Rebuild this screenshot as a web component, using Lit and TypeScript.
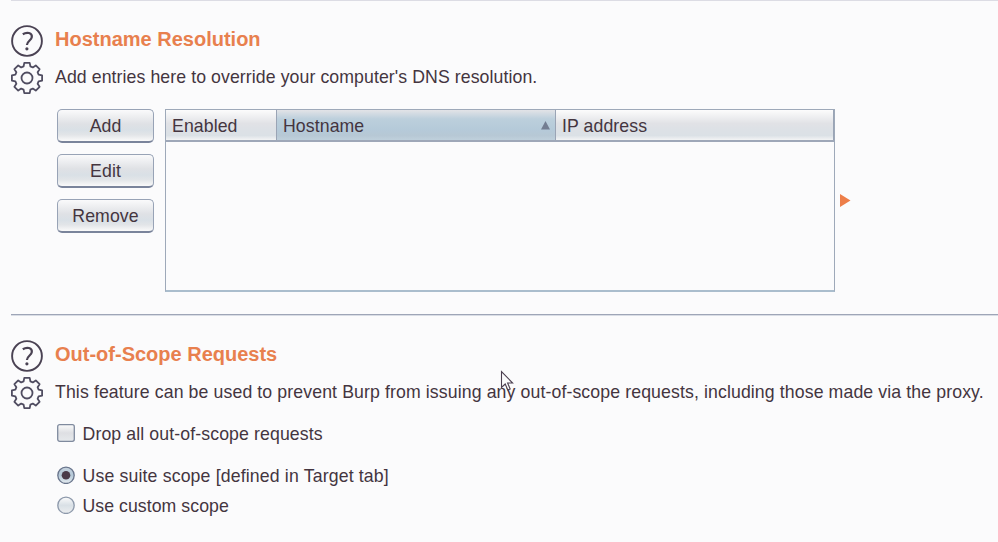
import { LitElement, html, css, svg } from "lit";
import { customElement, property } from "lit/decorators.js";

// Outline of an eight-toothed cog centred on 16,16.
function cogPath(): string {
  const points: string[] = [];
  const outer = 15.1;
  const root = 11.6;
  for (let i = 0; i < 8; i++) {
    const a = (i * Math.PI) / 4;
    const at = (along: number, side: number) =>
      `${(16 + along * Math.cos(a) - side * Math.sin(a)).toFixed(2)} ${(16 + along * Math.sin(a) + side * Math.cos(a)).toFixed(2)}`;
    points.push(`${i ? "L" : "M"}${at(root, -3.4)}L${at(outer, -2.7)}L${at(outer, 2.7)}L${at(root, 3.4)}`);
  }
  return points.join("") + "Z";
}

@customElement("help-icon")
class HelpIcon extends LitElement {
  static styles = css`
    :host { display: block; width: 32px; height: 32px; }
    svg { display: block; }
  `;
  render() {
    return html`<svg width="32" height="32" viewBox="0 0 32 32" fill="none" stroke="#4a4253">
      <circle cx="16" cy="16" r="14.9" stroke-width="1.9"></circle>
      <path d="M11.8 9.2C14 7.8 16.3 7.6 18 8C20.2 8.6 21.1 10.2 20.8 12.2C20.3 15.4 16.2 15.8 15.9 20" stroke-width="2.2"></path>
      <circle cx="15.9" cy="23.8" r="1.6" fill="#4a4253" stroke="none"></circle>
    </svg>`;
  }
}

@customElement("gear-icon")
class GearIcon extends LitElement {
  static styles = css`
    :host { display: block; width: 32px; height: 32px; }
    svg { display: block; }
  `;
  render() {
    return html`<svg width="32" height="32" viewBox="0 0 32 32" fill="none" stroke="#504d61" stroke-width="1.8" stroke-linejoin="round">
      ${svg`<path d=${cogPath()}></path>`}
      <circle cx="16" cy="16" r="5.5"></circle>
    </svg>`;
  }
}

@customElement("option-section")
class OptionSection extends LitElement {
  @property() heading = "";
  @property() description = "";
  static styles = css`
    :host { display: block; }
    .row { display: flex; gap: 12px; height: 32px; margin-bottom: 5.4px; }
    .row.last { margin-bottom: -0.4px; }
    .title, .desc { margin: 0; line-height: 24px; white-space: nowrap; }
    .title { font-size: 20px; font-weight: bold; letter-spacing: 0; color: #e8804e; padding-top: 2px; }
    .desc { font-size: 17.7px; font-weight: normal; padding-top: 2.6px; }
  `;
  render() {
    return html`
      <div class="row"><help-icon></help-icon><h2 class="title">${this.heading}</h2></div>
      <div class="row last"><gear-icon></gear-icon><p class="desc">${this.description}</p></div>
      <slot></slot>`;
  }
}

@customElement("app-root")
class AppRoot extends LitElement {
  static styles = css`
    :host {
      display: block; box-sizing: border-box; height: 542px; overflow: hidden;
      position: relative; padding-left: 11px; background: #fbfbfc; color: #44353f;
      font-family: "Liberation Sans", Arial, sans-serif; font-size: 17.7px;
    }
    .rule { height: 1px; background: #dcdce4; }
    .rule.mid { background: #9ea5b7; border-bottom: 1px solid #d9dde5; }
    .first { height: 289px; padding-top: 24px; letter-spacing: 0.085px; }
    .second { padding-top: 24px; letter-spacing: 0.11px; }
    .body { display: flex; padding: 15px 0 0 46px; }
    .buttons { display: flex; flex-direction: column; gap: 11px; width: 97px; margin-right: 11px; }
    .button {
      box-sizing: border-box; height: 34px; width: 97px; padding: 2px 0 0;
      border: 1px solid #98a3b6; border-bottom: 2px solid #7a849b; border-radius: 5px;
      background: linear-gradient(#fafafb, #dfe1e5 45%, #d9e0e6 65%, #e2e5e8 80%, #fafafa);
      font: inherit; color: inherit; letter-spacing: inherit; line-height: 29px;
    }
    .table {
      box-sizing: border-box; width: 670px; height: 183px;
      border: 1px solid #9ea9b9; border-bottom: 2px solid #aabdcd;
    }
    .head { display: grid; grid-template-columns: 111px 279px 278px; height: 30px; border-bottom: 2px solid #9ea7b8; }
    .cell {
      box-sizing: border-box; height: 30px; display: flex; align-items: center; justify-content: space-between;
      padding: 2px 5px 0 6px; line-height: 28px; border-right: 1px solid #9aa4b5;
      background: linear-gradient(#fcfcfc, #e1e2e6 45%, #dde1e6 65%, #dbe1e6 85%, #f3f4f5);
    }
    .cell svg { margin-bottom: 1px; }
    .cell.sorted { background: linear-gradient(#e2e3e7, #bccfdc 30%, #b5cad9 65%, #b7c8d5 85%, #bfd0dc); }
    .arrow { margin: 85px 0 0 5px; }
    .choices { padding: 14px 0 0 46px; }
    .choice { display: flex; align-items: center; gap: 7.5px; height: 20px; margin-bottom: 10px; line-height: 20px; }
    .choice span { padding-top: 2px; }
    .choice.wide { margin-bottom: 22px; }
    .choice.target { letter-spacing: 0.15px; }
    .choice.custom { letter-spacing: 0.05px; }
    .cursor { position: absolute; left: 500px; top: 370px; }
    svg { display: block; flex: none; }
  `;

  radio(checked: boolean) {
    return html`<svg width="18" height="18" viewBox="0 0 18 18">
      <circle cx="9" cy="9.3" r="8.2" fill=${checked ? "url(#on)" : "url(#off)"} stroke=${checked ? "#69758c" : "#8d99ab"} stroke-width="1.3"></circle>
      ${checked ? svg`<circle cx="9" cy="9.3" r="4.3" fill="#4b3b49"></circle>` : ""}
      <defs>
        <linearGradient id="on" x2="0" y2="1"><stop offset="0" stop-color="#c6d2de"></stop><stop offset=".5" stop-color="#b5c9d8"></stop><stop offset="1" stop-color="#e7edf1"></stop></linearGradient>
        <linearGradient id="off" x2="0" y2="1"><stop offset="0" stop-color="#fbfbfb"></stop><stop offset=".5" stop-color="#d9e0e6"></stop><stop offset="1" stop-color="#eceef0"></stop></linearGradient>
      </defs>
    </svg>`;
  }

  render() {
    return html`
      <div class="rule"></div>
      <option-section class="first" heading="Hostname Resolution" description="Add entries here to override your computer's DNS resolution.">
        <div class="body">
          <div class="buttons">${["Add", "Edit", "Remove"].map((t) => html`<button class="button">${t}</button>`)}</div>
          <div class="table">
            <div class="head">
              <div class="cell">Enabled</div>
              <div class="cell sorted">Hostname<svg width="9" height="9" viewBox="0 0 9 9"><path d="M4.5 0L9 8.5H0Z" fill="#737d91"></path></svg></div>
              <div class="cell">IP address</div>
            </div>
          </div>
          <div class="arrow"><svg width="11" height="13" viewBox="0 0 11 13"><path d="M0 0L10.5 6.5L0 13Z" fill="#ed7e49"></path></svg></div>
        </div>
      </option-section>
      <div class="rule mid"></div>
      <option-section class="second" heading="Out-of-Scope Requests" description="This feature can be used to prevent Burp from issuing any out-of-scope requests, including those made via the proxy.">
        <div class="choices">
          <div class="choice wide">
            <svg width="18" height="18" viewBox="0 0 18 18"><rect x=".7" y=".7" width="16.6" height="16.6" rx="2" fill="url(#box)" stroke="#7f8a9e" stroke-width="1.3"></rect>
              <defs><linearGradient id="box" x2="0" y2="1"><stop offset="0" stop-color="#fbfbfb"></stop><stop offset=".5" stop-color="#dedfe3"></stop><stop offset="1" stop-color="#e6e9ec"></stop></linearGradient></defs>
            </svg>
            <span>Drop all out-of-scope requests</span>
          </div>
          <div class="choice target">${this.radio(true)}<span>Use suite scope [defined in Target tab]</span></div>
          <div class="choice custom">${this.radio(false)}<span>Use custom scope</span></div>
        </div>
      </option-section>
      <svg class="cursor" width="14" height="22" viewBox="0 0 14 22"><path d="M1.5 1.5V17.5L5.2 14L7.8 20L10.2 19L7.6 13H12.6Z" fill="#fbfbfc" stroke="#4b3f50" stroke-width="1.1"></path></svg>
    `;
  }
}
